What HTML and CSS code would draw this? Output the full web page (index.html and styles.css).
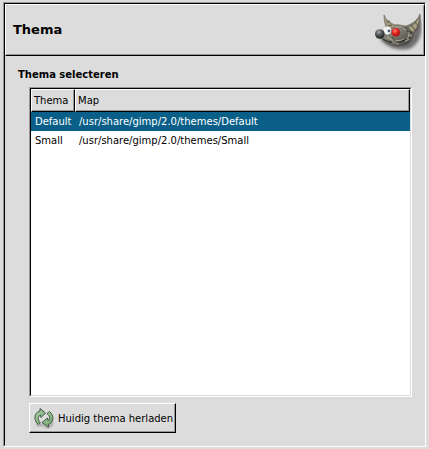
FILE: index.html
```
<!DOCTYPE html>
<html lang="nl">
<head>
<meta charset="utf-8">
<meta name="viewport" content="width=device-width, initial-scale=1">
<title>Thema</title>
<link rel="stylesheet" href="styles.css">
</head>
<body>
<main class="panel sunken">
  <div class="panel-inner sunken-inner">
    <header class="header raised">
      <h1 class="title">Thema</h1>
      <svg class="logo" viewBox="2 -2 48 48" aria-hidden="true">
        <defs>
          <linearGradient id="fur" x1="0" y1="0" x2=".8" y2="1">
            <stop offset="0" stop-color="#aaa58f"/>
            <stop offset=".55" stop-color="#7d7b70"/>
            <stop offset="1" stop-color="#3a3a38"/>
          </linearGradient>
          <radialGradient id="nose" cx=".4" cy=".3" r=".7">
            <stop offset="0" stop-color="#a2a6a8"/>
            <stop offset=".5" stop-color="#505355"/>
            <stop offset="1" stop-color="#1d1f20"/>
          </radialGradient>
          <radialGradient id="red" cx=".4" cy=".35" r=".65">
            <stop offset="0" stop-color="#ff8678"/>
            <stop offset=".45" stop-color="#e62b24"/>
            <stop offset="1" stop-color="#a81212"/>
          </radialGradient>
          <filter id="soft" x="-30%" y="-30%" width="160%" height="160%"><feGaussianBlur stdDeviation="1.8"/></filter>
        </defs>
        <path d="M8 31 L20 22 L36 22 L49 12 C51 28 46 37 37 41 C27 43 15 40 8 31Z" fill="#000" opacity=".5" filter="url(#soft)"/>
        <path d="M12 7 C14 12 18 15 23 17 C27 16 31 18 34 18 C40 16 45 13 48 6 C49 14 48 20 42 25 C41 32 38 37 29 38 C21 39 14 36 9 30 C11 27 13 25 16 23 C13 18 12 12 12 7Z" fill="url(#fur)" stroke="#5f5b4e" stroke-width=".6"/>
        <path d="M13 10 C15 14 18 16 22 18 L17 21 C15 18 13 14 13 10Z" fill="#a59b7c"/>
        <path d="M47 9 C45 15 41 18 36 20 L41 24 C45 20 47 15 47 9Z" fill="#aaa083"/>
        <path d="M39 17 L43 22 M35 19 L40 24 M43 14 L46 18 M15 14 L18 13 M16 18 L20 17" stroke="#565143" stroke-width="1" fill="none"/>
        <path d="M11 31 C18 36 29 36 38 29" stroke="#30302d" stroke-width="1.1" fill="none"/>
        <path d="M15 29 C20 33 27 34 32 31 M31 21 C37 21 39 26 35 31 M20 34 L27 36 M36 27 L40 28 M23 19 L30 19 M32 34 L37 31" stroke="#bab7a8" stroke-width="1.1" fill="none" opacity=".75"/>
        <path d="M20 29 L23 33 M30 32 L34 35 M35 23 L40 25 M33 19 L36 23" stroke="#30302d" stroke-width=".9" fill="none"/>
        <ellipse cx="15.5" cy="22.5" rx="3.6" ry="4.1" fill="#f3f3f4"/>
        <circle cx="17" cy="23" r="1.4" fill="#4d5c72"/>
        <circle cx="23.8" cy="24.2" r="4.3" fill="url(#red)"/>
        <ellipse cx="7.8" cy="26" rx="4.8" ry="4.8" fill="url(#nose)"/>
      </svg>
    </header>
    <section class="section">
      <h2 class="subtitle">Thema selecteren</h2>
      <div class="content">
        <div class="list sunken">
          <div class="list-inner sunken-inner">
            <table class="themes">
              <thead>
                <tr><th class="name" scope="col"><div class="raised cell">Thema</div></th><th scope="col"><div class="raised cell">Map</div></th></tr>
              </thead>
              <tbody>
                <tr class="selected"><td>Default</td><td>/usr/share/gimp/2.0/themes/Default</td></tr>
                <tr><td>Small</td><td>/usr/share/gimp/2.0/themes/Small</td></tr>
              </tbody>
            </table>
          </div>
        </div>
        <button class="reload raised" type="button">
          <svg class="icon" viewBox="1 1 22 22" aria-hidden="true">
            <defs>
              <linearGradient id="green" x1="0" y1="0" x2="1" y2="1">
                <stop offset="0" stop-color="#b9d9b5"/>
                <stop offset="1" stop-color="#639a60"/>
              </linearGradient>
              <filter id="haze" x="-20%" y="-60%" width="140%" height="220%"><feGaussianBlur stdDeviation="1"/></filter>
            </defs>
            <path d="M4 19 L12 19 L16 22 L21 17" fill="none" stroke="#000" stroke-width="2" opacity=".3" filter="url(#haze)"/>
            <g fill="url(#green)" stroke="#344936" stroke-width=".9" stroke-linejoin="round">
              <path d="M6.5 18.5 C1.5 15.5 1.5 6.5 8 5 L8 2.5 L13.5 7 L9 11.5 L8.5 9 C5.5 10.5 5.5 14.5 8.5 16.5Z"/>
              <path d="M17.5 5.5 C22 9 22.5 16.5 16.5 18.5 L16.5 21 L10 16.5 L15.5 12 L16 14.5 C18.5 13 18 10 15 7.5Z"/>
            </g>
          </svg>
          <span>Huidig thema herladen</span>
        </button>
      </div>
    </section>
  </div>
</main>
</body>
</html>
```
FILE: styles.css
```
* { box-sizing: border-box; }

body {
  margin: 0;
  padding: 2px 3px;
  min-height: 100vh;
  display: flex;
  background: #dcdcdc;
  color: #000;
  font: 10px/15px "DejaVu Sans", sans-serif;
}

/* Two-step bevels */
.sunken {
  border: 1px solid;
  border-color: #979797 #fff #fff #979797;
}
.sunken-inner {
  border: 1px solid;
  border-color: #000 #dcdcdc #dcdcdc #000;
}
.raised {
  border: 1px solid;
  border-color: #fff #000 #000 #fff;
  background: #dcdcdc;
  box-shadow: inset -1px -1px #979797;
}

.panel { flex: 1; display: flex; }
.panel-inner {
  flex: 1;
  display: flex;
  flex-direction: column;
  border-right: 0;
}

.header {
  display: flex;
  align-items: center;
  justify-content: space-between;
  height: 52px;
  padding: 0 2px 0 7px;
}
.title { margin: 0; font-size: 13px; line-height: 18px; }
.logo { width: 48px; height: 48px; }

.section {
  flex: 1;
  display: flex;
  flex-direction: column;
  gap: 5px;
  padding: 12px 13px 12px;
}
.subtitle { margin: 0; font-size: 10px; line-height: 14px; }
.content {
  flex: 1;
  display: flex;
  flex-direction: column;
  align-items: flex-start;
  gap: 6px;
  padding-left: 11px;
}

.list { flex: 1; align-self: stretch; display: flex; }
.list-inner { flex: 1; background: #fff; }
.themes {
  width: 100%;
  border-collapse: collapse;
  table-layout: fixed;
}
th { padding: 0; font-weight: normal; text-align: left; }
.name { width: 44px; }
.cell { height: 23px; padding: 3px 2px; }
td { height: 19px; padding: 0 4px; white-space: nowrap; }
.selected { background: #0a5f89; color: #fff; }

.reload {
  display: flex;
  align-items: center;
  gap: 3px;
  height: 30px;
  padding: 0 2px 0 3px;
  color: #000;
  font: inherit;
  white-space: nowrap;
}
.icon { width: 22px; height: 22px; }
```
